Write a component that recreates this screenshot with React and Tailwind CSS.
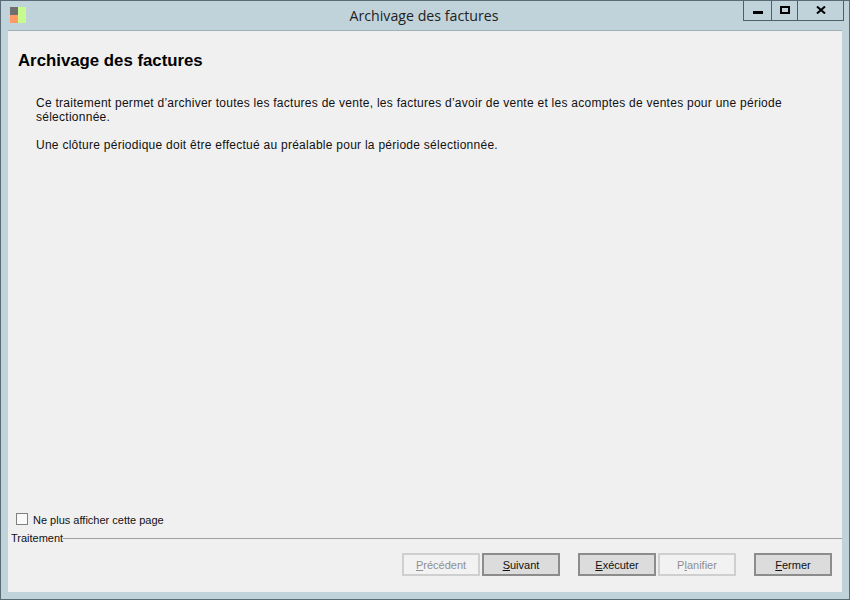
import { useState } from 'react';

function WizardButton({ letter, rest, before = '', disabled, className = '' }) {
  const look = disabled
    ? 'border-[#cfcfcf] bg-[#f2f2f2] text-[#8f8f8f]'
    : 'border-[#8c8c8c] bg-[#dcdcdc] text-[#111]';
  return (
    <button type="button" disabled={disabled} className={`w-[78px] h-[23px] border-2 text-[11px] leading-[18px] ${look} ${className}`}>
      {before}<span className="underline">{letter}</span>{rest}
    </button>
  );
}

export default function App() {
  const [hidePage, setHidePage] = useState(false);

  return (
    <div className="w-[850px] h-[600px] flex flex-col bg-[#c0d3da] border border-[#5b6b75] font-['Liberation_Sans',sans-serif] text-[#111] overflow-hidden">
      {/* Title bar */}
      <div className="h-[29px] shrink-0 flex pl-[8px] pr-[5px]">
        <svg width="18" height="16" viewBox="0 0 18 16" className="mt-[6px] shrink-0">
          <rect x="1" y="0" width="8" height="8" fill="#6f6f6f" />
          <rect x="1" y="8" width="8" height="8" fill="#ff9a66" />
          <rect x="9" y="0" width="8" height="16" fill="#c8fb8e" />
        </svg>
        <div className="flex-1 text-center text-[14.2px] leading-[29px] pl-[78px] text-[#222] font-['Open_Sans',sans-serif]">Archivage des factures</div>
        <div className="flex h-[21px] w-[101px] border border-t-0 border-[#4f5f68] -mt-px shrink-0">
          <div className="w-[28px] flex items-center justify-center border-r border-[#4f5f68]">
            <div className="w-[10px] h-[3px] bg-black mt-[5px]" />
          </div>
          <div className="w-[26px] flex items-center justify-center border-r border-[#4f5f68]">
            <div className="w-[10px] h-[8px] border-2 border-black" />
          </div>
          <div className="flex-1 flex items-center justify-center">
            <svg width="10" height="8" viewBox="0 0 10 8">
              <path d="M1 0.5 L9 7.5 M9 0.5 L1 7.5" stroke="#000" strokeWidth="2" fill="none" />
            </svg>
          </div>
        </div>
      </div>

      {/* Page */}
      <div className="flex-1 mx-[7px] mb-[7px] bg-[#f0f0f0] border-t border-[#9fb0b8] flex flex-col">
        <h1 className="font-bold text-[16.8px] leading-[20px] mt-[20px] ml-[10px] text-black">Archivage des factures</h1>
        <div className="mt-[25px] ml-[28px] mr-[20px] text-[12px] leading-[14px] tracking-[0.26px]">
          <p>Ce traitement permet d’archiver toutes les factures de vente, les factures d’avoir de vente et les acomptes de ventes pour une période sélectionnée.</p>
          <p className="mt-[14px]">Une clôture périodique doit être effectué au préalable pour la période sélectionnée.</p>
        </div>

        <label className="mt-auto ml-[8px] flex items-center gap-[5px] text-[11px] leading-[14px] cursor-pointer">
          <input
            type="checkbox"
            checked={hidePage}
            onChange={(e) => setHidePage(e.target.checked)}
            className="appearance-none w-[12px] h-[12px] -mt-[1px] bg-[#fafafa] border border-[#808080]"
          />
          <span className="mt-[2px]">Ne plus afficher cette page</span>
        </label>

        <div className="mt-[4px] flex items-center text-[11px] leading-[14px] ml-[3px]">
          <span>Traitement</span>
          <div className="flex-1 h-px bg-[#a0a0a0]" />
        </div>

        <div className="mt-[8px] mb-[16px] flex justify-end pr-[10px]">
          <WizardButton letter="P" rest="récédent" disabled />
          <WizardButton letter="S" rest="uivant" className="ml-[2px]" />
          <WizardButton letter="E" rest="xécuter" className="ml-[18px]" />
          <WizardButton before="P" letter="l" rest="anifier" disabled className="ml-[2px]" />
          <WizardButton letter="F" rest="ermer" className="ml-[18px]" />
        </div>
      </div>
    </div>
  );
}
